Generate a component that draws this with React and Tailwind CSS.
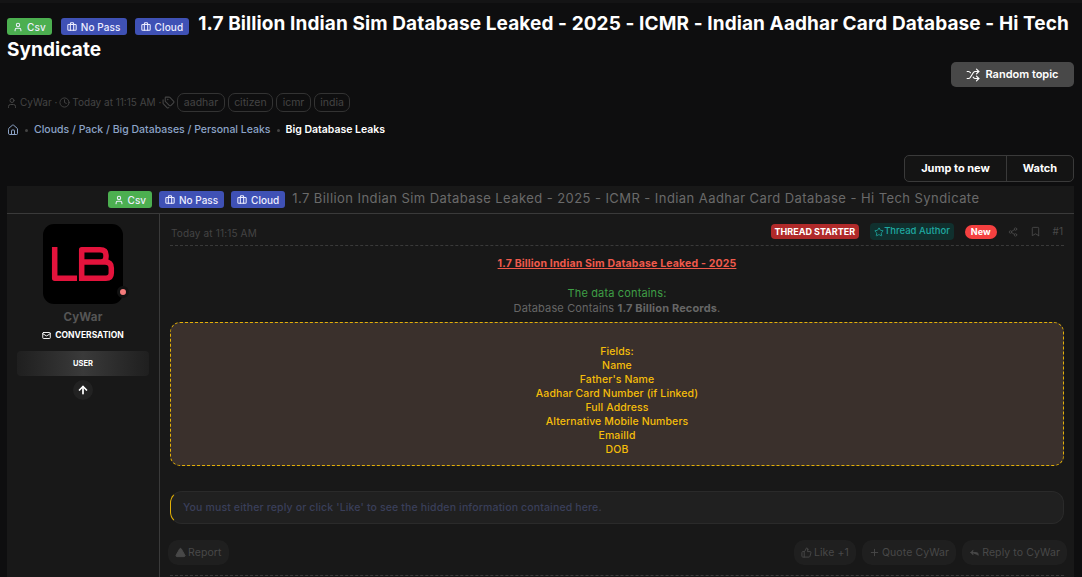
import { Shuffle, Home, User, Clock, Tags, Briefcase, Mail, ArrowUp, Share2, Bookmark, Star, TriangleAlert, ThumbsUp, Plus, Reply } from 'lucide-react';

const FONT = { fontFamily: 'Inter' };

function Badge({ color, icon: Icon, children }) {
  return (
    <span className={`inline-flex h-[17px] items-center gap-[4px] rounded-[3px] px-[6px] text-[10px] font-medium leading-none text-[#eef] ${color}`}>
      <Icon size={10} strokeWidth={2.5} />
      <span className="leading-none">{children}</span>
    </span>
  );
}

function Tag({ children }) {
  return (
    <span className="flex h-[19px] items-center rounded-[7px] border border-[#333] px-[5.5px] text-[10.5px] text-[#444]">
      {children}
    </span>
  );
}

function ActionButton({ icon: Icon, children, fill }) {
  return (
    <span className="flex h-[25px] items-center gap-[2px] rounded-[10px] bg-[#1f1f1f] px-[7px] text-[10.5px] tracking-[0.1px] text-[#484848]">
      <Icon size={11} strokeWidth={2} fill={fill ? '#484848' : 'none'} />
      {children}
    </span>
  );
}

export default function App() {
  const fields = ['Fields:', 'Name', "Father's Name", 'Aadhar Card Number (if Linked)', 'Full Address', 'Alternative Mobile Numbers', 'EmailId', 'DOB'];

  return (
    <div style={FONT} className="h-[577px] w-[1082px] overflow-hidden border-t-[3px] border-[#141415] bg-[#0e0e0f]">
      {/* Title */}
      <div className="px-[7px] pt-[8px]">
        <h1 className="text-[19px] font-bold leading-[26px] tracking-[0.1px] text-white">
          <span className="mr-[9px] inline-flex translate-y-[2px] gap-[8px] align-middle">
            <Badge color="bg-[#4caf50]" icon={User}>Csv</Badge>
            <Badge color="bg-[#3f51b5] ml-[1px]" icon={Briefcase}>No Pass</Badge>
            <Badge color="bg-[#3f51b5]" icon={Briefcase}>Cloud</Badge>
          </span>
          <span>1.7 Billion Indian Sim Database Leaked - 2025 - ICMR - Indian Aadhar Card Database - Hi Tech Syndicate</span>
        </h1>
        <div className="mr-[1px] mt-[-1px] flex justify-end">
          <button className="flex h-[25px] w-[123px] items-center justify-center gap-[5px] rounded-[5px] bg-[#484848] text-[11px] font-semibold text-white">
            <Shuffle size={14} strokeWidth={2} />
            Random topic
          </button>
        </div>

        {/* Meta */}
        <div className="mt-[6px] flex h-[19px] items-center gap-[2px] text-[10px] text-[#444]">
          <User size={12} className="ml-[-1px]" />
          <span>CyWar ·</span>
          <Clock size={11} />
          <span>Today at 11:15 AM ·</span>
          <Tags size={13} className="ml-[-1px]" />
          <span className="flex gap-[3px]">
            <Tag>aadhar</Tag>
            <Tag>citizen</Tag>
            <Tag>icmr</Tag>
            <Tag>india</Tag>
          </span>
        </div>

        {/* Breadcrumb */}
        <div className="mt-[11px] flex h-[14px] items-center text-[10.5px] font-medium text-[#8ca3c7]">
          <Home size={12} />
          <span className="mx-[6px] size-[3px] rounded-full bg-[#444]" />
          <span>Clouds / Pack / Big Databases / Personal Leaks</span>
          <span className="mx-[6px] size-[3px] rounded-full bg-[#444]" />
          <span className="font-semibold text-white">Big Database Leaks</span>
        </div>

        <div className="mr-[1px] mt-[18px] flex justify-end">
          <div className="flex h-[27px] w-[170px] items-center rounded-[5px] border border-[#3a3a3a] bg-[#141414] text-[11px] font-bold text-white">
            <span className="flex h-full w-[102px] items-center justify-center border-r border-[#3a3a3a]">Jump to new</span>
            <span className="flex-1 text-center">Watch</span>
          </div>
        </div>

        {/* Thread panel */}
        <div className="mr-[1px] mt-[4px] bg-[#181818]">
          <div className="flex h-[28px] items-center justify-center gap-[7px] border-b border-[#3a3a3a] pl-[6px]">
            <Badge color="bg-[#4caf50]" icon={User}>Csv</Badge>
            <Badge color="bg-[#3f51b5]" icon={Briefcase}>No Pass</Badge>
            <Badge color="bg-[#3f51b5]" icon={Briefcase}>Cloud</Badge>
            <span className="mt-[-2px] text-[13px] tracking-[0.43px] text-[#6a6a6a]">1.7 Billion Indian Sim Database Leaked - 2025 - ICMR - Indian Aadhar Card Database - Hi Tech Syndicate</span>
          </div>

          <div className="flex h-[400px]">
            {/* Sidebar */}
            <div className="flex w-[153px] flex-col items-center border-r border-[#3a3a3a] pt-[10px]">
              <div className="relative size-[80px] rounded-[11px] bg-black">
                <svg viewBox="0 0 80 80" className="size-[80px]">
                  <path fill="none" stroke="#e3133c" strokeWidth="5.5" strokeLinejoin="round" d="M11.7 23V54.2H34M38.7 54.2V25.8H57Q63 25.8 63 31V33Q63 38 58 38H41M58 38H62Q68.3 38 68.3 44V49Q68.3 54.2 63 54.2H36" />
                </svg>
                <span className="absolute bottom-[6px] right-[-6px] size-[12px] rounded-full border-[3px] border-[#111] bg-[#f47a7a]" />
              </div>
              <div className="mt-[5px] text-[11.5px] font-bold tracking-[0.2px] text-[#555]">CyWar</div>
              <div className="mt-[3px] flex items-center gap-[4px] text-[8.5px] font-bold text-white">
                <Mail size={9} strokeWidth={2.5} />
                CONVERSATION
              </div>
              <div className="mt-[9px] flex h-[25px] w-[132px] items-center justify-center rounded-[4px] bg-gradient-to-r from-[#1f1f1f] via-[#3a3a3a] to-[#1f1f1f] text-[7.5px] font-bold text-white">
                USER
              </div>
              <div className="mt-[4px] flex size-[20px] items-center justify-center rounded-full bg-[#222]">
                <ArrowUp size={12} strokeWidth={3.5} className="text-white" />
              </div>
            </div>

            {/* Post */}
            <div className="flex-1 px-[10px]">
              <div className="flex h-[32px] items-center justify-between border-b border-dashed border-[#3a3a3a] px-[1px] pt-[4px]">
                <span className="mt-[3px] text-[10px] tracking-[0.15px] text-[#444]">Today at 11:15 AM</span>
                <div className="flex items-center">
                  <span className="flex h-[15px] items-center rounded-[4px] bg-[#b02a2a] px-[4px] text-[9px] font-bold text-white">THREAD STARTER</span>
                  <span className="ml-[11px] flex h-[17px] items-center rounded-[4px] bg-[#10302e] px-[4px] text-[9.5px] font-medium text-[#1fa8a0]">
                    <Star size={10} strokeWidth={2} />
                    Thread Author
                  </span>
                  <span className="ml-[11px] flex h-[14px] items-center rounded-full bg-[#f44040] px-[6px] text-[9px] font-bold text-white">New</span>
                  <Share2 size={10} className="ml-[11px] text-[#484848]" />
                  <Bookmark size={11} className="ml-[12px] text-[#484848]" />
                  <span className="ml-[12px] text-[10px] text-[#484848]">#1</span>
                </div>
              </div>

              <div className="mt-[11px] text-center text-[11px] leading-[15px]">
                <div className="text-[10.5px] font-bold leading-[14px] tracking-[0.17px] text-[#ef5a4c] underline">1.7 Billion Indian Sim Database Leaked - 2025</div>
                <div className="mt-[15px] tracking-[0.15px] text-[#3f9f46]">The data contains:</div>
                <div className="tracking-[0.15px] text-[#666]">Database Contains <b className="font-bold">1.7 Billion Records</b>.</div>
              </div>

              <div className="mt-[6px] flex h-[144px] flex-col items-center justify-center rounded-[10px] border border-dashed border-[#e2b007] bg-[#3a302c] pt-[13px] text-[10.5px] font-medium leading-[14px] tracking-[0.1px] text-[#f5bd0a]">
                {fields.map((f) => <div key={f}>{f}</div>)}
              </div>

              <div className="mt-[25px] flex h-[33px] items-center rounded-[12px] border border-[#2a2a2a] border-l-[#e2b007] bg-[#202020] px-[12px] text-[10.5px] font-medium tracking-[0.15px] text-[#3a3f5a]">
                You must either reply or click 'Like' to see the hidden information contained here.
              </div>

              <div className="mt-[16px] flex items-center justify-between">
                <span className="ml-[-2px]"><ActionButton icon={TriangleAlert} fill>Report</ActionButton></span>
                <div className="mr-[-3px] flex gap-[6px]">
                  <ActionButton icon={ThumbsUp}>Like +1</ActionButton>
                  <ActionButton icon={Plus}>Quote CyWar</ActionButton>
                  <ActionButton icon={Reply} fill>Reply to CyWar</ActionButton>
                </div>
              </div>
              <div className="mt-[10px] border-b border-dashed border-[#3a3a3a]" />
            </div>
          </div>
        </div>
      </div>
    </div>
  );
}
